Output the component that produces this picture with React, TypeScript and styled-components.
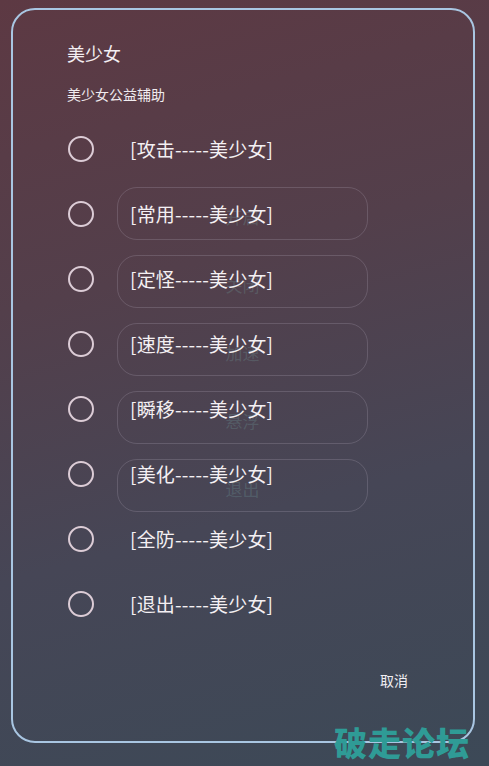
import React from "react";
import styled, { createGlobalStyle } from "styled-components";

const Global = createGlobalStyle`
  html, body { margin: 0; padding: 0; }
  body {
    width: 489px;
    height: 766px;
    overflow: hidden;
    font-family: "Noto Sans CJK SC", "Noto Sans", sans-serif;
    background: linear-gradient(165deg, #5d3943 0%, #533f4b 35%, #464656 65%, #3c4957 100%);
  }
`;

const Screen = styled.div`
  position: relative;
  width: 489px;
  height: 766px;
`;

const BackPage = styled.div`
  display: flex;
  flex-direction: column;
  align-items: center;
  gap: 15px;
  padding: 187px 0 0 0;
  margin-left: -4px;
`;

const GhostButton = styled.div`
  width: 251px;
  height: 53px;
  box-sizing: border-box;
  border: 1px solid rgba(190, 180, 200, 0.22);
  border-radius: 20px;
  display: flex;
  align-items: center;
  justify-content: center;
  padding-top: 6px;
  font-size: 17px;
  color: rgba(110, 150, 150, 0.3);
`;

const Dialog = styled.div`
  position: absolute;
  left: 11px;
  top: 8px;
  width: 464px;
  height: 735px;
  box-sizing: border-box;
  border: 2px solid #a9c6e2;
  border-radius: 24px;
  display: flex;
  flex-direction: column;
  padding: 30px 0 0 54px;
`;

const Title = styled.div`
  font-size: 18px;
  line-height: 26px;
  color: #f3eef2;
`;

const Subtitle = styled.div`
  margin-top: 18px;
  font-size: 14px;
  line-height: 20px;
  color: #f0ebef;
`;

const List = styled.div`
  display: flex;
  flex-direction: column;
  margin-top: 12px;
`;

const Option = styled.div`
  height: 65px;
  display: flex;
  align-items: center;
`;

const Radio = styled.div`
  width: 22px;
  height: 22px;
  border: 2.5px solid #dcccd6;
  border-radius: 50%;
  margin-left: 1px;
`;

const OptionLabel = styled.div`
  margin-left: 36px;
  font-size: 19px;
  color: #f4f0f3;
  letter-spacing: 0.2px;
`;

const Footer = styled.div`
  display: flex;
  justify-content: flex-end;
  padding-right: 65px;
  margin-top: 34px;
`;

const Cancel = styled.div`
  font-size: 14px;
  color: #f0eef2;
`;

const Watermark = styled.div`
  position: absolute;
  left: 334px;
  top: 721px;
  font-size: 33px;
  font-weight: 900;
  line-height: 42px;
  color: #2f9b96;
  letter-spacing: 1px;
`;

const ghosts = ["开启", "关闭", "加速", "悬浮", "退出"];
const options = ["攻击", "常用", "定怪", "速度", "瞬移", "美化", "全防", "退出"];

export default function App() {
  return (
    <Screen>
      <Global />
      <BackPage>
        {ghosts.map((g) => (
          <GhostButton key={g}>{g}</GhostButton>
        ))}
      </BackPage>
      <Dialog>
        <Title>美少女</Title>
        <Subtitle>美少女公益辅助</Subtitle>
        <List>
          {options.map((o) => (
            <Option key={o}>
              <Radio />
              <OptionLabel>[{o}-----美少女]</OptionLabel>
            </Option>
          ))}
        </List>
        <Footer>
          <Cancel>取消</Cancel>
        </Footer>
      </Dialog>
      <Watermark>破走论坛</Watermark>
    </Screen>
  );
}
